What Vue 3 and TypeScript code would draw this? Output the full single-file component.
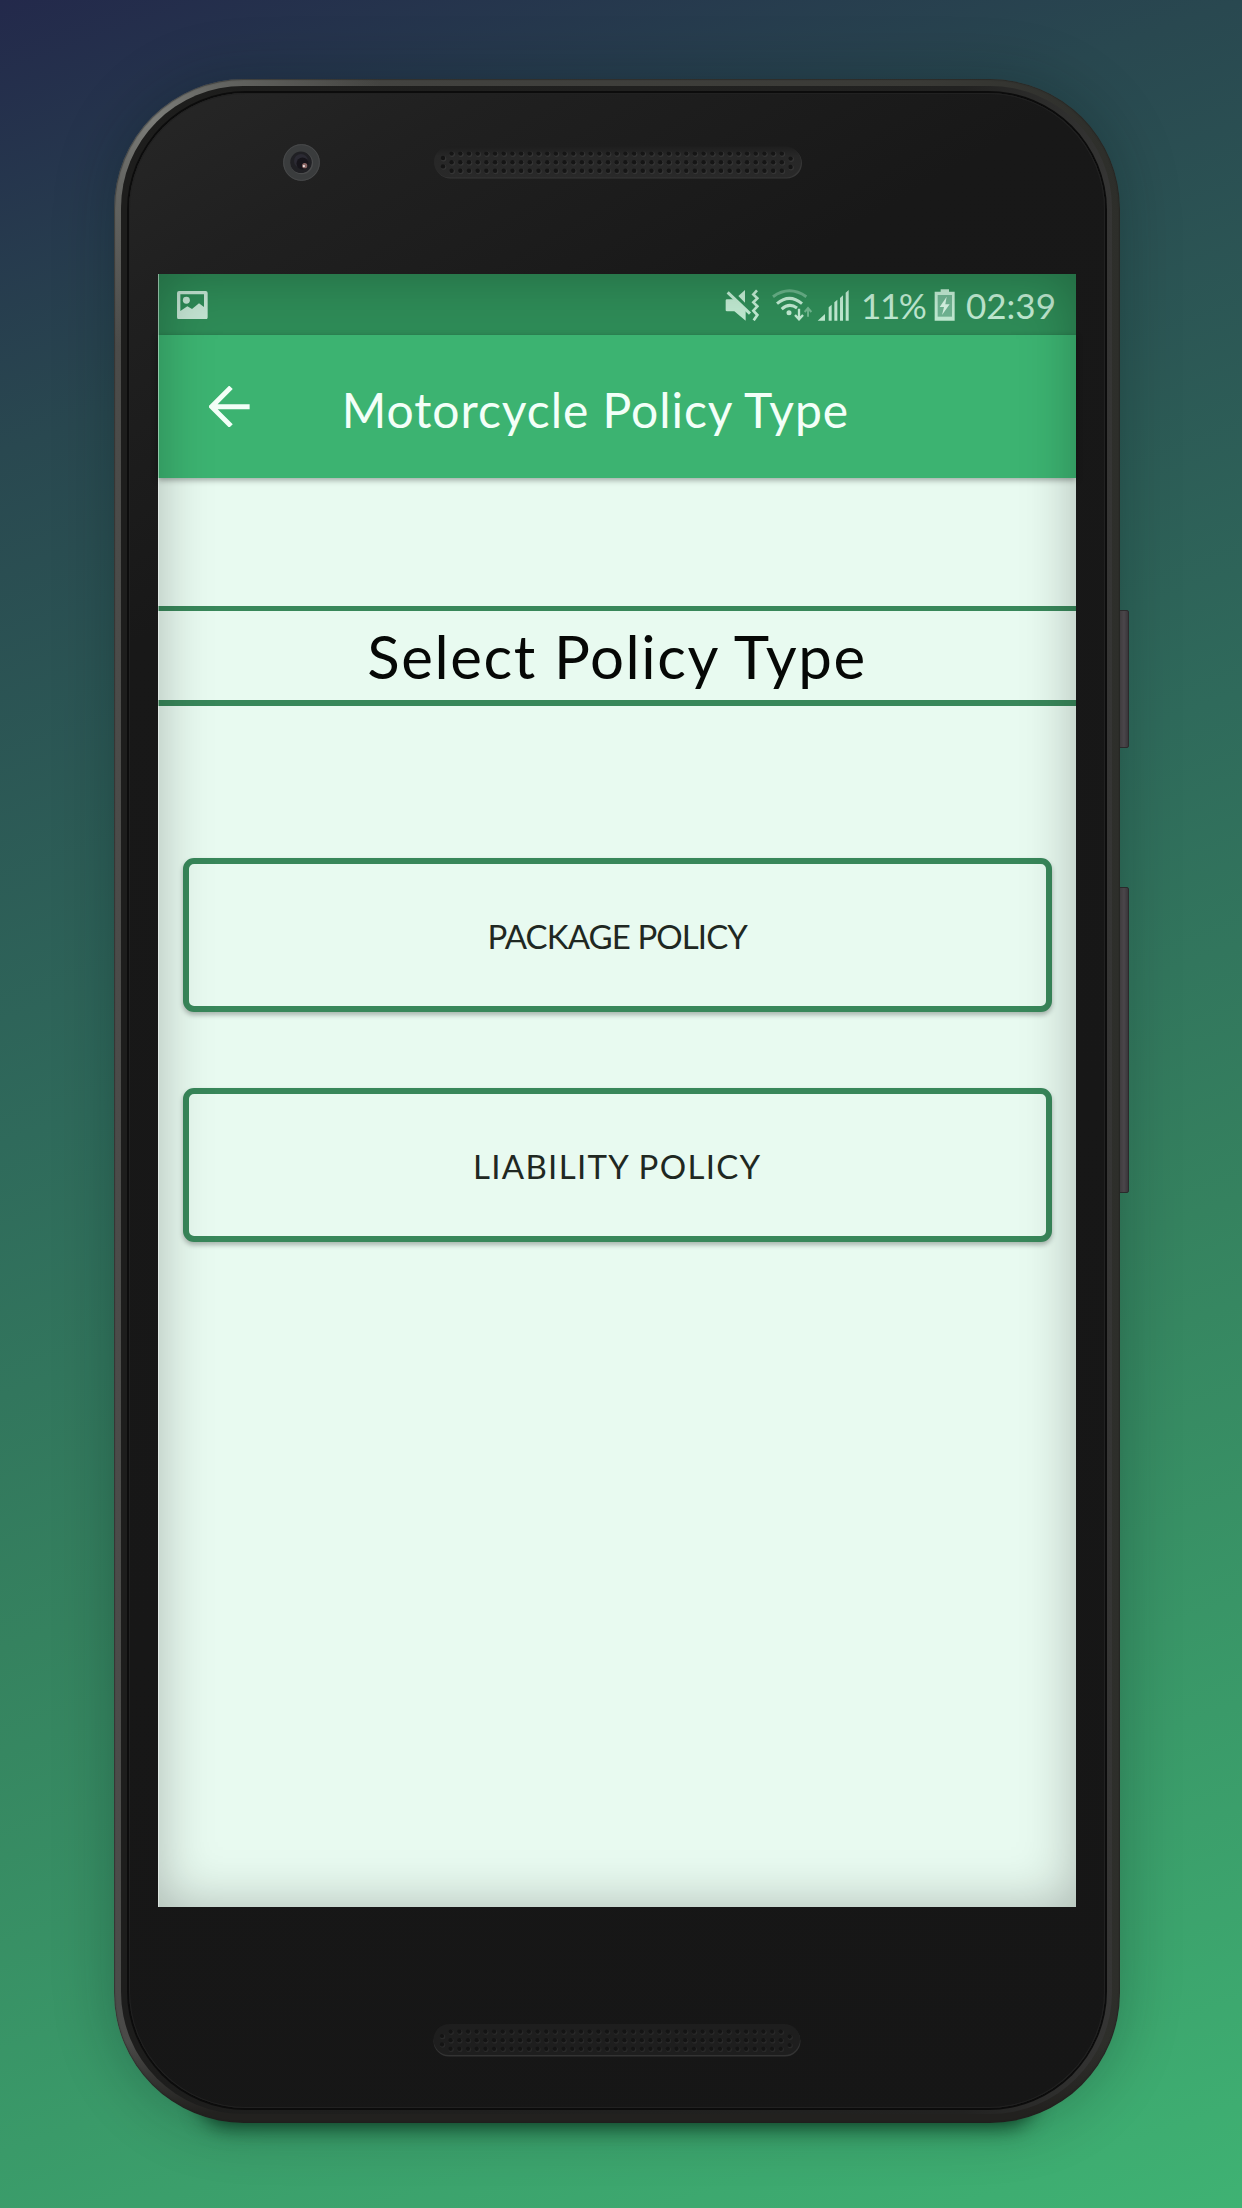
<script setup lang="ts">
interface Dot {
  x: number
  y: number
}

const grille: Dot[] = []
for (let column = 0; column < 39; column++) {
  for (let row = 0; row < 3; row++) {
    grille.push({ x: 17.6 + column * 8.69, y: 7.6 + row * 8.6 })
  }
}
grille.push({ x: 9, y: 12 }, { x: 9, y: 20.4 }, { x: 356.6, y: 12.6 }, { x: 356.6, y: 21 })

const policies: { id: string; label: string }[] = [
  { id: 'package', label: 'PACKAGE POLICY' },
  { id: 'liability', label: 'LIABILITY POLICY' },
]
</script>

<template>
  <main class="stage">
    <div class="phone">
      <i class="key power"></i>
      <i class="key volume"></i>
      <div class="rim">
        <div class="face">
          <div class="bezel">
            <svg class="camera" viewBox="0 0 37 37">
              <circle cx="18.5" cy="18.5" r="18.5" fill="#3a3c3d" />
              <circle cx="18.5" cy="18.5" r="17.8" fill="none" stroke="#474849" />
              <circle cx="18.8" cy="19" r="11.3" fill="#4a4b4c" />
              <circle cx="18" cy="18.3" r="10.8" fill="#202024" />
              <circle cx="18" cy="17" r="7" fill="#2b2a33" />
              <circle cx="19.5" cy="19.5" r="6" fill="#17151b" />
              <circle cx="21.7" cy="21.7" r="2.6" fill="#8b6866" />
              <circle cx="20.9" cy="22.1" r="1.1" fill="#eee6e6" />
            </svg>
            <svg class="speaker" viewBox="0 0 368 33">
              <defs>
                <linearGradient id="earpiece" x1="0" y1="0" x2="0" y2="1">
                  <stop offset="0" stop-color="#1e1e1e" />
                  <stop offset="0.3" stop-color="#272727" />
                  <stop offset="1" stop-color="#292929" />
                </linearGradient>
              </defs>
              <rect x="1" y="2" width="367" height="30.5" rx="15.2" fill="#363636" />
              <rect x="0" y="0.5" width="367" height="31" rx="15.5" fill="url(#earpiece)" />
              <circle v-for="(dot, i) in grille" :key="'h' + i" :cx="dot.x + 0.6" :cy="dot.y + 0.7" r="2.7" fill="#353535" />
              <circle v-for="(dot, i) in grille" :key="i" :cx="dot.x" :cy="dot.y" r="2.2" fill="#151515" />
            </svg>
          </div>

          <div class="screen">
            <header class="status">
              <svg class="photo" viewBox="231 692 92 85">
                <path fill="#c4e5d3" fill-rule="evenodd" d="M237 692H317Q323 692 323 698V771Q323 777 317 777H237Q231 777 231 771V698Q231 692 237 692ZM241 702V752L262 738L276 746L297 729L312 740V702Z" />
                <circle cx="259" cy="720" r="10.500" fill="#c4e5d3" />
              </svg>
              <div class="indicators">
                <svg class="mute" viewBox="78 56 102 98">
                  <path fill="#bfe8d0" d="M80 90Q80 87 84 87H106L140 119V151L106 123H84Q80 123 80 120ZM118 77L138 59V97Z" />
                  <path d="M86 66L153 130" stroke="#bfe8d0" stroke-width="9" />
                  <path d="M174 60L163 72L175 84L163 96L175 108L163 121L175 134L164 150" fill="none" stroke="#bfe8d0" stroke-width="8" />
                </svg>
                <svg class="wifi" viewBox="218 56 122 98">
                  <g fill="none" stroke="#bfe8d0" stroke-width="9">
                    <path d="M221 79Q270 44 321 79" opacity=".4" />
                    <path d="M233 100Q270 68 308 100" />
                    <path d="M247 116Q270 96 293 113" />
                  </g>
                  <circle cx="269" cy="127" r="7.5" fill="#bfe8d0" />
                  <path d="M299 115V146M287 134L299 147L311 134" fill="none" stroke="#bfe8d0" stroke-width="7" />
                  <path d="M326 139V114M316 125L326 113L336 125" fill="none" stroke="#bfe8d0" stroke-width="6" opacity=".45" />
                </svg>
                <svg class="signal" viewBox="354 56 98 98" fill="#bfe8d0">
                  <path d="M356 151L378 131V151ZM389 111L398 103V151H389ZM406 96L415 88V151H406ZM423 83L432 75V151H423ZM440 67L449 59V151H440Z" />
                </svg>
                <span class="reading percent">11%</span>
                <svg class="battery" viewBox="704 56 66 96">
                  <path fill="#bfe8d0" d="M724 57H749V64H766V151H706V64H724Z" />
                  <path fill="#6fb391" d="M715 74H758V139H715Z" />
                  <path fill="#d5f3e2" d="M742 79L721 110H734L728 134L751 102H738Z" />
                </svg>
                <span class="reading clock">02:39</span>
              </div>
            </header>

            <nav class="appbar">
              <svg class="back" viewBox="176 378 124 124">
                <path d="M298 440H186M242 382L184 440L242 498" fill="none" stroke="#f3fff8" stroke-width="15" />
              </svg>
              <h1 class="title">Motorcycle Policy Type</h1>
            </nav>

            <h2 class="heading"><span>Select Policy Type</span></h2>

            <section class="choices">
              <button v-for="policy in policies" :key="policy.id" type="button" class="choice" :class="policy.id">
                <span>{{ policy.label }}</span>
              </button>
            </section>
          </div>

          <div class="chin">
            <svg class="speaker" viewBox="0 0 368 33">
              <rect x="0.5" y="1.5" width="367" height="31" rx="15.5" fill="#333333" />
              <rect x="0.5" y="0" width="366.500" height="31" rx="15.5" fill="#1e1e1e" />
              <circle v-for="(dot, i) in grille" :key="'h' + i" :cx="dot.x + 0.6" :cy="dot.y + 0.7" r="2.6" fill="#292929" />
              <circle v-for="(dot, i) in grille" :key="i" :cx="dot.x" :cy="dot.y" r="2.1" fill="#141414" />
            </svg>
          </div>
        </div>
      </div>
    </div>
  </main>
</template>

<style>
body {
  margin: 0;
}
</style>

<style scoped>
.stage {
  box-sizing: border-box;
  width: 1242px;
  height: 2208px;
  padding: 79px 122px 85px 114px;
  overflow: hidden;
  background: linear-gradient(160deg, #23294b 0%, #294850 17%, #2f6a5b 43%, #35825f 62%, #3fb273 100%);
  font-family: Lato, "Open Sans", sans-serif;
}

.phone {
  position: relative;
  width: 1006px;
  height: 2044px;
  border-radius: 130px;
  box-shadow: 0 0 60px rgba(0, 20, 20, 0.28);
}

.phone::before {
  content: "";
  position: absolute;
  left: 85px;
  right: 85px;
  bottom: 6px;
  height: 60px;
  border-radius: 40px;
  box-shadow: 0 10px 20px rgba(0, 35, 18, 0.75);
}

.key {
  position: absolute;
  left: 1003px;
  width: 12px;
  box-sizing: border-box;
  border-radius: 2px;
  border: 1px solid #2a2a2b;
  background: linear-gradient(90deg, #3a3739, #4a464a 60%, #39363a);
}

.power {
  top: 531px;
  height: 138px;
}

.volume {
  top: 808px;
  height: 306px;
}

.rim {
  position: relative;
  box-sizing: border-box;
  width: 100%;
  height: 100%;
  padding: 14px 15px 15px;
  border-radius: 130px;
  background:
    radial-gradient(circle at 40px 40px, #7c7d79 0, rgba(110, 111, 107, 0.75) 70px, rgba(80, 80, 78, 0) 230px),
    linear-gradient(180deg, rgba(34, 33, 31, 0) 96%, #22211f 99.5%),
    linear-gradient(90deg, #4b4b49 0, #42423f 30%, #3a3a36 80%, #2d2e2a 100%);
  box-shadow: inset 0 0 1px 1px rgba(30, 30, 28, 0.5);
}

.rim::before {
  content: "";
  position: absolute;
  inset: 7px 8px 9px 7px;
  border-radius: 122px;
  background: linear-gradient(90deg, #1d1d1c 0, #222221 85%, #353534 100%);
}

.face {
  position: relative;
  box-sizing: border-box;
  height: 100%;
  padding: 0 29px;
  display: flex;
  flex-direction: column;
  border-radius: 117px;
  background: linear-gradient(150deg, #272727 0, #202020 180px, #181818 480px, #161616 100%);
  box-shadow: 0 0 0 2px #0c0c0c, inset 0 0 0 1px #212121;
}

.bezel {
  flex: none;
  height: 138px;
  padding-bottom: 43px;
  display: flex;
  align-items: center;
}

.camera {
  width: 37px;
  height: 37px;
  margin-left: 125px;
}

.speaker {
  display: block;
  width: 368px;
  height: 33px;
}

.bezel .speaker {
  margin-left: 114px;
}

.screen {
  position: relative;
  flex: none;
  height: 1632.5px;
  background: #e8faf0;
}

.screen::after {
  content: "";
  position: absolute;
  inset: 0;
  pointer-events: none;
  box-shadow: inset 1px 0 0 rgba(255, 255, 255, 0.45), inset 0 0 54px rgba(0, 0, 0, 0.27);
}

.status {
  box-sizing: border-box;
  height: 61.3px;
  padding: 0 21px 0 19px;
  display: flex;
  justify-content: space-between;
  align-items: flex-start;
  background: #2e8b57;
}

.photo {
  width: 30.7px;
  height: 28.3px;
  margin-top: 16.500px;
}

.indicators {
  display: flex;
  align-items: flex-start;
  padding-top: 14.7px;
}

.mute {
  width: 34px;
  height: 32.7px;
}

.wifi {
  width: 40.7px;
  height: 32.7px;
  margin-left: 12.7px;
}

.signal {
  width: 32.7px;
  height: 32.7px;
  margin-left: 4.7px;
}

.battery {
  width: 22px;
  height: 32px;
}

.reading {
  color: #bfe8d0;
  font-size: 35px;
  line-height: 33px;
  white-space: nowrap;
}

.percent {
  width: 73px;
  margin-left: 11px;
  letter-spacing: -1.4px;
}

.clock {
  width: 89px;
  margin-left: 10px;
}

.appbar {
  position: relative;
  height: 143px;
  display: flex;
  align-items: center;
  background: #3cb371;
  box-shadow: 0 2px 6px rgba(0, 0, 0, 0.35);
}

.back {
  width: 41.3px;
  height: 41.3px;
  margin-left: 50.5px;
}

.title {
  margin: 6px 0 0 92px;
  color: #f3fff8;
  font-size: 48px;
  font-weight: 400;
  line-height: 60px;
  letter-spacing: 0.95px;
  white-space: nowrap;
}

.heading {
  box-sizing: border-box;
  height: 100px;
  margin: 127.5px 0 0;
  padding-top: 2px;
  display: flex;
  justify-content: center;
  align-items: center;
  border: solid #38875a;
  border-width: 5.5px 0 6px;
  color: #060806;
  font-size: 60px;
  font-weight: 400;
  line-height: 80px;
  letter-spacing: 1.6px;
  white-space: nowrap;
}

.choices {
  padding: 152.500px 24.5px 0 25px;
  display: flex;
  flex-direction: column;
  gap: 75.5px;
}

.choice {
  box-sizing: border-box;
  height: 154px;
  padding: 2px 0 0;
  display: flex;
  justify-content: center;
  align-items: center;
  border: 6.500px solid #38875a;
  border-radius: 11px;
  background: #e8faf0;
  box-shadow: 0 3px 5px rgba(0, 0, 0, 0.28);
  color: #1f2822;
  font-family: inherit;
  font-size: 33px;
  line-height: 40px;
  white-space: nowrap;
}

.package {
  letter-spacing: -0.9px;
}

.liability {
  letter-spacing: 1.3px;
}

.chin {
  padding-top: 117px;
  display: flex;
  justify-content: center;
}
</style>
